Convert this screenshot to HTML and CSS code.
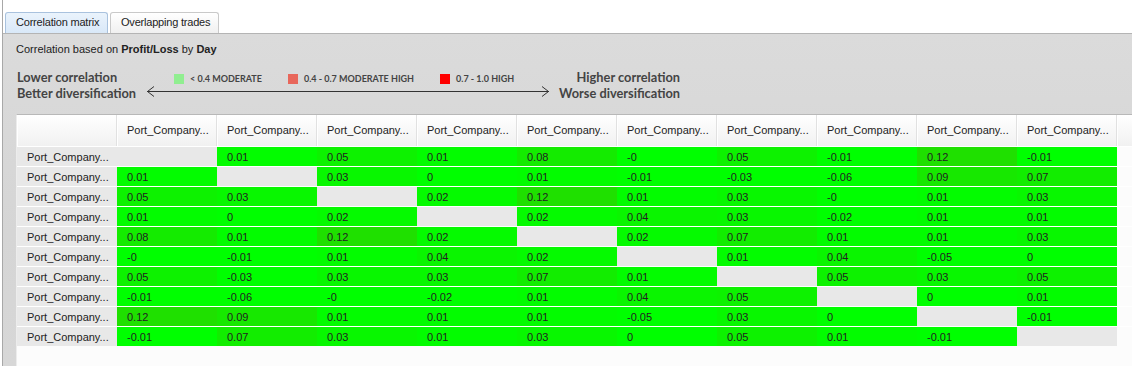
FILE: index.html
```html
<!DOCTYPE html>
<html>
<head>
<meta charset="utf-8">
<title>Correlation matrix</title>
<link rel="stylesheet" href="styles.css">
</head>
<body>
<div class="frame">
  <div class="tabs">
    <div class="tab active">Correlation matrix</div>
    <div class="tab">Overlapping trades</div>
  </div>
  <div class="panel">
    <div class="caption">Correlation based on <b>Profit/Loss</b> by <b>Day</b></div>
    <div class="legend">
      <div class="lbl left">Lower correlation<br>Better diversification</div>
      <div class="scale">
        <div class="items">
          <span class="item"><i class="sq sq-mod"></i>&lt; 0.4 MODERATE</span>
          <span class="item"><i class="sq sq-modhigh"></i>0.4 - 0.7 MODERATE HIGH</span>
          <span class="item"><i class="sq sq-high"></i>0.7 - 1.0 HIGH</span>
        </div>
        <svg class="arrow" width="405" height="12" viewBox="0 0 405 12">
          <line x1="1" y1="6.5" x2="403" y2="6.5" stroke="#333" stroke-width="1"/>
          <polyline points="8,1.5 1.5,6.5 8,11.5" fill="none" stroke="#333" stroke-width="1"/>
          <polyline points="396,1.5 402.5,6.5 396,11.5" fill="none" stroke="#333" stroke-width="1"/>
        </svg>
      </div>
      <div class="lbl right">Higher correlation<br>Worse diversification</div>
    </div>
    <div class="grid-wrap">
      <div class="matrix">
        <div class="hc"></div>
        <div class="hc">Port_Company...</div><div class="hc">Port_Company...</div><div class="hc">Port_Company...</div><div class="hc">Port_Company...</div><div class="hc">Port_Company...</div>
        <div class="hc">Port_Company...</div><div class="hc">Port_Company...</div><div class="hc">Port_Company...</div><div class="hc">Port_Company...</div><div class="hc">Port_Company...</div>
        <div class="hc stub"></div>

        <div class="rh">Port_Company...</div>
        <div class="dg"></div>
        <div class="c" style="background:rgb(3,252,0)">0.01</div>
        <div class="c" style="background:rgb(13,242,0)">0.05</div>
        <div class="c" style="background:rgb(3,252,0)">0.01</div>
        <div class="c" style="background:rgb(20,235,0)">0.08</div>
        <div class="c" style="background:rgb(0,255,0)">-0</div>
        <div class="c" style="background:rgb(13,242,0)">0.05</div>
        <div class="c" style="background:rgb(0,255,0)">-0.01</div>
        <div class="c" style="background:rgb(31,224,0)">0.12</div>
        <div class="c" style="background:rgb(0,255,0)">-0.01</div>
        <div class="e"></div>

        <div class="rh">Port_Company...</div>
        <div class="c" style="background:rgb(3,252,0)">0.01</div>
        <div class="dg"></div>
        <div class="c" style="background:rgb(8,247,0)">0.03</div>
        <div class="c" style="background:rgb(0,255,0)">0</div>
        <div class="c" style="background:rgb(3,252,0)">0.01</div>
        <div class="c" style="background:rgb(0,255,0)">-0.01</div>
        <div class="c" style="background:rgb(0,255,0)">-0.03</div>
        <div class="c" style="background:rgb(0,255,0)">-0.06</div>
        <div class="c" style="background:rgb(23,232,0)">0.09</div>
        <div class="c" style="background:rgb(18,237,0)">0.07</div>
        <div class="e"></div>

        <div class="rh">Port_Company...</div>
        <div class="c" style="background:rgb(13,242,0)">0.05</div>
        <div class="c" style="background:rgb(8,247,0)">0.03</div>
        <div class="dg"></div>
        <div class="c" style="background:rgb(5,250,0)">0.02</div>
        <div class="c" style="background:rgb(31,224,0)">0.12</div>
        <div class="c" style="background:rgb(3,252,0)">0.01</div>
        <div class="c" style="background:rgb(8,247,0)">0.03</div>
        <div class="c" style="background:rgb(0,255,0)">-0</div>
        <div class="c" style="background:rgb(3,252,0)">0.01</div>
        <div class="c" style="background:rgb(8,247,0)">0.03</div>
        <div class="e"></div>

        <div class="rh">Port_Company...</div>
        <div class="c" style="background:rgb(3,252,0)">0.01</div>
        <div class="c" style="background:rgb(0,255,0)">0</div>
        <div class="c" style="background:rgb(5,250,0)">0.02</div>
        <div class="dg"></div>
        <div class="c" style="background:rgb(5,250,0)">0.02</div>
        <div class="c" style="background:rgb(10,245,0)">0.04</div>
        <div class="c" style="background:rgb(8,247,0)">0.03</div>
        <div class="c" style="background:rgb(0,255,0)">-0.02</div>
        <div class="c" style="background:rgb(3,252,0)">0.01</div>
        <div class="c" style="background:rgb(3,252,0)">0.01</div>
        <div class="e"></div>

        <div class="rh">Port_Company...</div>
        <div class="c" style="background:rgb(20,235,0)">0.08</div>
        <div class="c" style="background:rgb(3,252,0)">0.01</div>
        <div class="c" style="background:rgb(31,224,0)">0.12</div>
        <div class="c" style="background:rgb(5,250,0)">0.02</div>
        <div class="dg"></div>
        <div class="c" style="background:rgb(5,250,0)">0.02</div>
        <div class="c" style="background:rgb(18,237,0)">0.07</div>
        <div class="c" style="background:rgb(3,252,0)">0.01</div>
        <div class="c" style="background:rgb(3,252,0)">0.01</div>
        <div class="c" style="background:rgb(8,247,0)">0.03</div>
        <div class="e"></div>

        <div class="rh">Port_Company...</div>
        <div class="c" style="background:rgb(0,255,0)">-0</div>
        <div class="c" style="background:rgb(0,255,0)">-0.01</div>
        <div class="c" style="background:rgb(3,252,0)">0.01</div>
        <div class="c" style="background:rgb(10,245,0)">0.04</div>
        <div class="c" style="background:rgb(5,250,0)">0.02</div>
        <div class="dg"></div>
        <div class="c" style="background:rgb(3,252,0)">0.01</div>
        <div class="c" style="background:rgb(10,245,0)">0.04</div>
        <div class="c" style="background:rgb(0,255,0)">-0.05</div>
        <div class="c" style="background:rgb(0,255,0)">0</div>
        <div class="e"></div>

        <div class="rh">Port_Company...</div>
        <div class="c" style="background:rgb(13,242,0)">0.05</div>
        <div class="c" style="background:rgb(0,255,0)">-0.03</div>
        <div class="c" style="background:rgb(8,247,0)">0.03</div>
        <div class="c" style="background:rgb(8,247,0)">0.03</div>
        <div class="c" style="background:rgb(18,237,0)">0.07</div>
        <div class="c" style="background:rgb(3,252,0)">0.01</div>
        <div class="dg"></div>
        <div class="c" style="background:rgb(13,242,0)">0.05</div>
        <div class="c" style="background:rgb(8,247,0)">0.03</div>
        <div class="c" style="background:rgb(13,242,0)">0.05</div>
        <div class="e"></div>

        <div class="rh">Port_Company...</div>
        <div class="c" style="background:rgb(0,255,0)">-0.01</div>
        <div class="c" style="background:rgb(0,255,0)">-0.06</div>
        <div class="c" style="background:rgb(0,255,0)">-0</div>
        <div class="c" style="background:rgb(0,255,0)">-0.02</div>
        <div class="c" style="background:rgb(3,252,0)">0.01</div>
        <div class="c" style="background:rgb(10,245,0)">0.04</div>
        <div class="c" style="background:rgb(13,242,0)">0.05</div>
        <div class="dg"></div>
        <div class="c" style="background:rgb(0,255,0)">0</div>
        <div class="c" style="background:rgb(3,252,0)">0.01</div>
        <div class="e"></div>

        <div class="rh">Port_Company...</div>
        <div class="c" style="background:rgb(31,224,0)">0.12</div>
        <div class="c" style="background:rgb(23,232,0)">0.09</div>
        <div class="c" style="background:rgb(3,252,0)">0.01</div>
        <div class="c" style="background:rgb(3,252,0)">0.01</div>
        <div class="c" style="background:rgb(3,252,0)">0.01</div>
        <div class="c" style="background:rgb(0,255,0)">-0.05</div>
        <div class="c" style="background:rgb(8,247,0)">0.03</div>
        <div class="c" style="background:rgb(0,255,0)">0</div>
        <div class="dg"></div>
        <div class="c" style="background:rgb(0,255,0)">-0.01</div>
        <div class="e"></div>

        <div class="rh">Port_Company...</div>
        <div class="c" style="background:rgb(0,255,0)">-0.01</div>
        <div class="c" style="background:rgb(18,237,0)">0.07</div>
        <div class="c" style="background:rgb(8,247,0)">0.03</div>
        <div class="c" style="background:rgb(3,252,0)">0.01</div>
        <div class="c" style="background:rgb(8,247,0)">0.03</div>
        <div class="c" style="background:rgb(0,255,0)">0</div>
        <div class="c" style="background:rgb(13,242,0)">0.05</div>
        <div class="c" style="background:rgb(3,252,0)">0.01</div>
        <div class="c" style="background:rgb(0,255,0)">-0.01</div>
        <div class="dg"></div>
        <div class="e"></div>
      </div>
    </div>
  </div>
</div>
</body>
</html>
```

FILE: styles.css
```css
html, body {
  margin: 0;
  padding: 0;
  height: 100%;
  overflow: hidden;
  background: #fff;
}
body {
  font-family: "Liberation Sans", Arial, sans-serif;
  font-size: 11px;
  color: #222;
}
.frame {
  margin-left: 2px;
  border-left: 1px solid #a8a8a8;
  height: 100%;
  display: flex;
  flex-direction: column;
}
.tabs {
  display: flex;
  padding-top: 12px;
  padding-left: 2px;
  gap: 2px;
  height: 21px;
}
.tab {
  box-sizing: border-box;
  flex: none;
  height: 21px;
  padding: 0 0 0 10px;
  line-height: 19px;
  white-space: nowrap;
  border: 1px solid #c9c9c9;
  border-bottom: none;
  border-radius: 3px 3px 0 0;
  background: linear-gradient(#ffffff, #f0f0f0);
  color: #222;
  width: 109px;
  letter-spacing: -0.2px;
}
.tab.active {
  width: 103px;
  border-color: #a9c2de;
  background: linear-gradient(#eaf3fc, #d9e8f8);
}
.panel {
  flex: 1;
  border-top: 1px solid #b4b4b4;
  background: linear-gradient(#dbdbdb, #d5d5d5 60%, #d7d7d7);
  padding-left: 13px;
  display: flex;
  flex-direction: column;
}
.caption {
  padding-top: 8px;
  line-height: 14px;
  color: #222;
}
.caption b {
  font-weight: bold;
}
.legend {
  display: flex;
  margin-top: 13px;
  height: 32px;
  margin-bottom: 13px;
}
.lbl {
  font-family: Lato, "Open Sans", sans-serif;
  font-weight: bold;
  font-size: 12.8px;
  line-height: 16px;
  color: #444;
  width: 129px;
  white-space: nowrap;
}
.lbl.left {
  margin-left: 1px;
}
.lbl.right {
  text-align: right;
}
.scale {
  width: 405px;
  padding-top: 4px;
  display: flex;
  flex-direction: column;
}
.items {
  display: flex;
  height: 12px;
  padding-left: 28px;
  gap: 26px;
  font-family: Lato, "Open Sans", sans-serif;
  font-weight: bold;
  font-size: 9px;
  line-height: 12px;
  color: #444;
  white-space: nowrap;
}
.item {
  display: flex;
  align-items: center;
  gap: 6px;
}
.sq {
  display: block;
  width: 10px;
  height: 10px;
}
.sq-mod { background: #90ee90; }
.sq-modhigh { background: #e8675b; }
.sq-high { background: #ff0000; }
.arrow {
  display: block;
}
.grid-wrap {
  flex: 1;
  border-top: 1px solid #b8b8b8;
  border-left: 1px solid #ececec;
  background: #fcfcfc;
  overflow: hidden;
}
.matrix {
  display: grid;
  grid-template-columns: 100px repeat(10, 100px) 15px;
  grid-template-rows: 31px;
  grid-auto-rows: 19px;
  row-gap: 1px;
  background: #ffffff;
  width: 1115px;
}
.hc {
  box-sizing: border-box;
  background: linear-gradient(#ffffff, #f1f1f1);
  border-right: 1px solid #e1e1e1;
  border-left: 1px solid #ffffff;
  padding-left: 9px;
  line-height: 31px;
  color: #222;
  white-space: nowrap;
}
.hc.stub {
  border-right: none;
}
.rh, .dg {
  background: #e8e8e8;
}
.rh, .c {
  padding-left: 10px;
  line-height: 20px;
  white-space: nowrap;
  color: #222;
}
.e {
  background: #fcfcfc;
}
```
